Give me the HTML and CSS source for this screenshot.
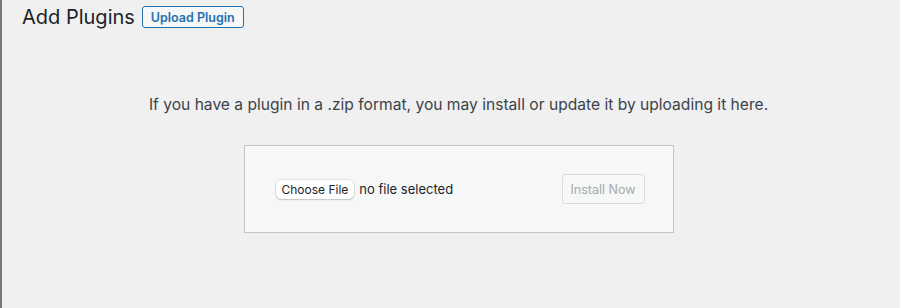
FILE: index.html
```html
<!DOCTYPE html>
<html lang="en">
<head>
  <meta charset="UTF-8" />
  <meta name="viewport" content="width=device-width, initial-scale=1.0"/>
  <title>Add Plugins</title>
  <link rel="stylesheet" href="styles.css">
</head>
<body>

  <div class="wrap">
    <div class="page-head">
      <h1>Add Plugins</h1>
      <button class="upload-toggle">Upload Plugin</button>
    </div>

    <div class="upload-plugin">
      <p class="install-help">If you have a plugin in a .zip format, you may install or update it by uploading it here.</p>

      <form class="upload-form">
        <div class="file-field">
          <span class="choose-btn">Choose File</span>
          <span class="file-name">no file selected</span>
        </div>
        <button class="install-btn" disabled>Install Now</button>
      </form>
    </div>
  </div>

</body>
</html>
```

FILE: styles.css
```css
* {
  box-sizing: border-box;
  margin: 0;
  padding: 0;
  font-family: Inter, 'Noto Sans', sans-serif;
}

body {
  background: #f0f0f1;
  color: #3c434a;
}

.wrap {
  min-height: 308px;
  border-left: 2px solid #787878;
  padding: 5px 5px 0 20px;
}

.page-head {
  display: flex;
  align-items: center;
  gap: 7px;
}

h1 {
  font-size: 20px;
  font-weight: 400;
  color: #1d2327;
  line-height: 24px;
}

.upload-toggle {
  height: 22px;
  padding: 0 8px;
  border: 1px solid #2271b1;
  border-radius: 3px;
  background: #f6f7f7;
  color: #2271b1;
  font-size: 12.5px;
  font-weight: 600;
}

.upload-plugin {
  text-align: center;
  padding-top: 66px;
}

.install-help {
  font-size: 15.6px;
  line-height: 20px;
  color: #3c434a;
}

.upload-form {
  display: inline-flex;
  align-items: center;
  justify-content: space-between;
  width: 430px;
  height: 88px;
  margin-top: 30px;
  padding: 0 28px 0 31px;
  border: 1px solid #c3c4c7;
  background: #f6f7f7;
}

.file-field {
  display: flex;
  align-items: center;
  gap: 5px;
  font-size: 13px;
  color: #1d2327;
}

.choose-btn {
  padding: 2px 6px;
  background: #fff;
  border-radius: 5px;
  box-shadow: 0 0 0 0.5px rgba(0,0,0,0.15), 0 1px 2px rgba(0,0,0,0.15);
  color: #1d2327;
  font-size: 12px;
}

.install-btn {
  height: 30px;
  padding: 0 8px;
  border: 1px solid #dcdcde;
  border-radius: 3px;
  background: #f6f7f7;
  color: #a7aaad;
  font-size: 12.5px;
}
```
